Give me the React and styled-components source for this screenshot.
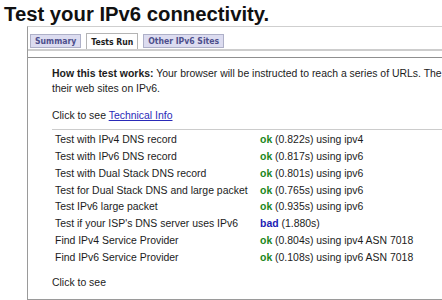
import styled, { createGlobalStyle } from "styled-components";

const Global = createGlobalStyle`
  html, body {
    margin: 0;
    padding: 0;
    background: #fff;
    overflow: hidden;
  }
  body {
    font-family: "Liberation Sans", Arial, sans-serif;
    color: #1c1c1c;
  }
`;

const Page = styled.div`
  padding: 3px 0 0 4px;
`;

const Title = styled.h1`
  margin: 0;
  font: 700 20.3px/23px "Liberation Sans", Arial, sans-serif;
  color: #111;
  white-space: nowrap;
`;

const Panel = styled.section`
  margin-left: 23px;
  width: 900px;
  border-top: 1px solid #cfcfcf;
  border-left: 1px solid #9a9a9a;
  border-bottom: 1px solid #9a9a9a;
`;

const TabBar = styled.nav`
  display: flex;
  align-items: flex-start;
  gap: 5px;
  padding: 6px 0 0 2px;
  height: 16px;
  border-bottom: 2px solid #cdcdcd;
`;

const Tab = styled.button`
  appearance: none;
  margin: ${(p) => (p.$active ? "0" : "1px 0 0")};
  height: ${(p) => (p.$active ? "16px" : "14px")};
  padding: 0 4px;
  border: 1px solid ${(p) => (p.$active ? "#b4b4b4" : "#aeb0c8")};
  border-bottom: ${(p) => (p.$active ? "none" : "1px solid #aeb0c8")};
  background: ${(p) => (p.$active ? "#fff" : "#dcdcf0")};
  color: ${(p) => (p.$active ? "#1c1c1c" : "#4d4f8c")};
  font: 700 8.6px/12px "DejaVu Sans Condensed", "DejaVu Sans", sans-serif;
  white-space: nowrap;
  cursor: pointer;
`;

const Content = styled.div`
  margin-top: 6px;
  border-top: 1px solid #8f8f8f;
  padding: 9px 0 8px 24px;
  font-size: 10.45px;
  line-height: 14.7px;
`;

const Intro = styled.p`
  margin: 0;
  white-space: nowrap;

  b {
    font-weight: 700;
  }
`;

const ClickLine = styled.p`
  margin: ${(p) => p.$top || "13px"} 0 0;
`;

const Link = styled.a`
  color: #2a2ab8;
  text-decoration: underline;
`;

const Divider = styled.hr`
  margin: 4.7px 0 0;
  border: 0;
  border-top: 1px solid #cccccc;
`;

const Results = styled.div`
  display: grid;
  grid-template-columns: 205px auto;
  grid-auto-rows: 16.75px;
  align-items: center;
  margin-top: 2.6px;
`;

const Cell = styled.div`
  padding-left: 3px;
  white-space: nowrap;
`;

const Status = styled.b`
  font-weight: 700;
  color: ${(p) => (p.$bad ? "#1c1cb4" : "#1b861b")};
`;

const rows = [
  ["Test with IPv4 DNS record", "ok", "(0.822s) using ipv4"],
  ["Test with IPv6 DNS record", "ok", "(0.817s) using ipv6"],
  ["Test with Dual Stack DNS record", "ok", "(0.801s) using ipv6"],
  ["Test for Dual Stack DNS and large packet", "ok", "(0.765s) using ipv6"],
  ["Test IPv6 large packet", "ok", "(0.935s) using ipv6"],
  ["Test if your ISP's DNS server uses IPv6", "bad", "(1.880s)"],
  ["Find IPv4 Service Provider", "ok", "(0.804s) using ipv4 ASN 7018"],
  ["Find IPv6 Service Provider", "ok", "(0.108s) using ipv6 ASN 7018"],
];

export default function App() {
  return (
    <Page>
      <Global />
      <Title>Test your IPv6 connectivity.</Title>
      <Panel>
        <TabBar>
          <Tab type="button">Summary</Tab>
          <Tab type="button" $active>
            Tests Run
          </Tab>
          <Tab type="button">Other IPv6 Sites</Tab>
        </TabBar>
        <Content>
          <Intro>
            <b>How this test works:</b> Your browser will be instructed to reach a
            series of URLs. The specific URLs will help guess what kind of failures
            you might have when publishers enable
            <br />
            their web sites on IPv6.
          </Intro>
          <ClickLine>
            Click to see <Link href="#">Technical Info</Link>
          </ClickLine>
          <Divider />
          <Results>
            {rows.map(([label, state, detail]) => (
              <>
                <Cell key={label}>{label}</Cell>
                <Cell key={label + "-s"}>
                  <Status $bad={state === "bad"}>{state}</Status> {detail}
                </Cell>
              </>
            ))}
          </Results>
          <ClickLine $top="9.7px">Click to see</ClickLine>
        </Content>
      </Panel>
    </Page>
  );
}
